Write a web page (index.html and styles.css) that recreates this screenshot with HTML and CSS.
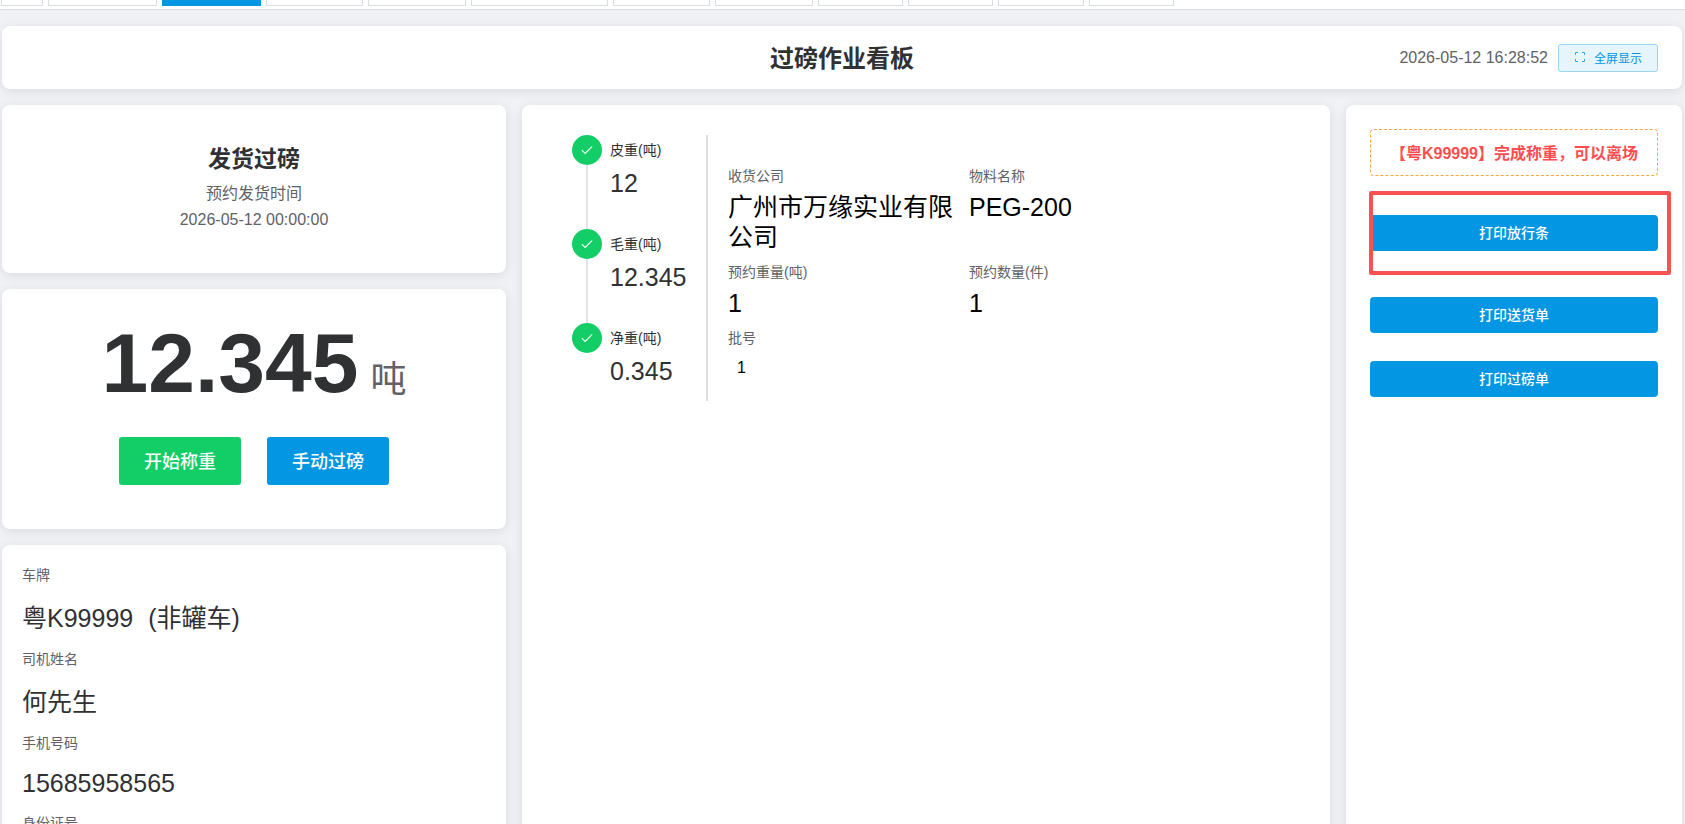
FILE: index.html
```html
<!DOCTYPE html>
<html lang="zh-CN">
<head>
    <meta charset="UTF-8">
    <meta name="viewport" content="width=device-width, initial-scale=1.0">
    <title>过磅作业看板</title>
    <link rel="stylesheet" href="styles.css">
</head>
<body>
    <div class="tags-bar">
        <span class="tag" style="width: 42px"></span>
        <span class="tag" style="width: 109px"></span>
        <span class="tag active" style="width: 99px"></span>
        <span class="tag" style="width: 97px"></span>
        <span class="tag" style="width: 98px"></span>
        <span class="tag" style="width: 137px"></span>
        <span class="tag" style="width: 97px"></span>
        <span class="tag" style="width: 98px"></span>
        <span class="tag" style="width: 85px"></span>
        <span class="tag" style="width: 85px"></span>
        <span class="tag" style="width: 86px"></span>
        <span class="tag" style="width: 85px"></span>
    </div>

    <div class="board">
        <header class="card header">
            <h1>过磅作业看板</h1>
            <div class="header-right">
                <span class="clock">2026-05-12 16:28:52</span>
                <button class="btn-full">
                    <svg width="12" height="12" viewBox="0 0 12 12" fill="none" stroke="currentColor">
                        <path d="M1.5 4V1.5H4M8 1.5H10.5V4M10.5 8V10.5H8M4 10.5H1.5V8"/>
                    </svg>
                    <span>全屏显示</span>
                </button>
            </div>
        </header>

        <main class="content">
            <div class="left">
                <section class="card plan">
                    <h2>发货过磅</h2>
                    <p class="plan-label">预约发货时间</p>
                    <p class="plan-time">2026-05-12 00:00:00</p>
                </section>

                <section class="card scale">
                    <div class="weight">
                        <span class="weight-num">12.345</span>
                        <span class="weight-unit">吨</span>
                    </div>
                    <div class="scale-btns">
                        <button class="btn btn-big btn-green">开始称重</button>
                        <button class="btn btn-big">手动过磅</button>
                    </div>
                </section>

                <section class="card driver">
                    <div class="label">车牌</div>
                    <div class="value">粤K99999<span class="car-type">(非罐车)</span></div>
                    <div class="label">司机姓名</div>
                    <div class="value">何先生</div>
                    <div class="label">手机号码</div>
                    <div class="value value-num">15685958565</div>
                    <div class="label">身份证号</div>
                </section>
            </div>

            <section class="card middle">
                <div class="steps">
                    <div class="step">
                        <div class="step-icon">
                            <svg width="14" height="14" viewBox="0 0 14 14"><path d="M1.8 7.2L5.2 10.4L12.2 3.4"/></svg>
                        </div>
                        <div class="step-main">
                            <div class="step-title">皮重(吨)</div>
                            <div class="step-value">12</div>
                        </div>
                    </div>
                    <div class="step">
                        <div class="step-icon">
                            <svg width="14" height="14" viewBox="0 0 14 14"><path d="M1.8 7.2L5.2 10.4L12.2 3.4"/></svg>
                        </div>
                        <div class="step-main">
                            <div class="step-title">毛重(吨)</div>
                            <div class="step-value">12.345</div>
                        </div>
                    </div>
                    <div class="step">
                        <div class="step-icon">
                            <svg width="14" height="14" viewBox="0 0 14 14"><path d="M1.8 7.2L5.2 10.4L12.2 3.4"/></svg>
                        </div>
                        <div class="step-main">
                            <div class="step-title">净重(吨)</div>
                            <div class="step-value">0.345</div>
                        </div>
                    </div>
                </div>

                <div class="detail">
                    <div class="field">
                        <div class="field-label">收货公司</div>
                        <div class="field-value">广州市万缘实业有限公司</div>
                    </div>
                    <div class="field">
                        <div class="field-label">物料名称</div>
                        <div class="field-value">PEG-200</div>
                    </div>
                    <div class="field">
                        <div class="field-label">预约重量(吨)</div>
                        <div class="field-value">1</div>
                    </div>
                    <div class="field">
                        <div class="field-label">预约数量(件)</div>
                        <div class="field-value">1</div>
                    </div>
                    <div class="field">
                        <div class="field-label">批号</div>
                        <div class="field-batch">1</div>
                    </div>
                </div>
            </section>

            <aside class="card right">
                <div class="notice">【粤K99999】完成称重，可以离场</div>
                <div class="print-item marked">
                    <button class="btn btn-print">打印放行条</button>
                </div>
                <div class="print-item">
                    <button class="btn btn-print">打印送货单</button>
                </div>
                <div class="print-item">
                    <button class="btn btn-print">打印过磅单</button>
                </div>
            </aside>
        </main>
    </div>
</body>
</html>
```

FILE: styles.css
```css
*, *::before, *::after {
    box-sizing: border-box;
}
body {
    margin: 0;
    height: 824px;
    overflow: hidden;
    background-color: #f0f2f5;
    font-family: "Liberation Sans", "Noto Sans CJK SC", sans-serif;
    color: #303133;
}
h1, h2, p {
    margin: 0;
}
button {
    font-family: inherit;
    cursor: pointer;
}

/* tags */
.tags-bar {
    display: flex;
    gap: 5px;
    height: 10px;
    padding-left: 1px;
    background-color: #fff;
    border-bottom: 1px solid #d8dce5;
}
.tag {
    height: 6px;
    border: 1px solid #d8dce5;
    border-top: none;
    background-color: #fff;
}
.tag.active {
    background-color: #0396e2;
    border-color: #0396e2;
}

.board {
    padding: 16px 3px 0 2px;
}
.card {
    background-color: #fff;
    border-radius: 8px;
    box-shadow: 0 2px 12px rgba(0, 0, 0, 0.1);
}

/* header */
.header {
    display: grid;
    grid-template-columns: 1fr auto 1fr;
    align-items: center;
    height: 63px;
    padding: 0 24px;
}
.header h1 {
    grid-column: 2;
    font-size: 24px;
    line-height: 36px;
    padding-top: 3px;
}
.header-right {
    display: flex;
    justify-content: flex-end;
    align-items: center;
    gap: 10px;
}
.clock {
    font-size: 16px;
    color: #606266;
}
.btn-full {
    display: flex;
    align-items: center;
    justify-content: center;
    gap: 8px;
    width: 100px;
    height: 28px;
    padding: 0 0 1px;
    font-size: 12px;
    color: #0396e2;
    background-color: #e6f5fc;
    border: 1px solid #9ad5f3;
    border-radius: 3px;
}
.btn-full svg {
    opacity: 0.8;
}

/* layout */
.content {
    display: grid;
    grid-template-columns: 504px 808px 336px;
    gap: 16px;
    height: 760px;
    margin-top: 16px;
}
.left {
    display: flex;
    flex-direction: column;
    gap: 16px;
}

.plan {
    height: 168px;
    padding-top: 36px;
    text-align: center;
}
.plan h2 {
    font-size: 23px;
    line-height: 36px;
}
.plan p {
    font-size: 16px;
    line-height: 26px;
    color: #606266;
}
.plan .plan-label {
    padding-top: 4px;
}

.scale {
    height: 240px;
    padding-top: 26px;
}
.weight {
    display: flex;
    justify-content: center;
    align-items: baseline;
    gap: 12px;
    height: 122px;
    line-height: 96px;
}
.weight-num {
    font-size: 84px;
    font-weight: bold;
}
.weight-unit {
    font-size: 36px;
    color: #606266;
}
.scale-btns {
    display: flex;
    justify-content: center;
    gap: 26px;
}
.btn {
    padding: 0 0 2px;
    border: none;
    color: #fff;
    background-color: #0396e2;
    font-weight: 500;
}
.btn-big {
    width: 122px;
    height: 48px;
    font-size: 18px;
    border-radius: 3px;
}
.btn-green {
    background-color: #13ce66;
}

.driver {
    flex: 1;
    padding: 20px;
}
.label {
    height: 20px;
    font-size: 14px;
    line-height: 21px;
    color: #606266;
}
.value {
    height: 64px;
    font-size: 25px;
    line-height: 66px;
}
.value-num {
    height: 60px;
    line-height: 60px;
}
.car-type {
    margin-left: 15px;
}

/* weighing steps and order detail */
.middle {
    display: flex;
    align-items: flex-start;
    padding: 30px 50px;
}
.steps {
    width: 136px;
    height: 266px;
    border-right: 2px solid #ddd;
}
.step {
    position: relative;
    display: flex;
    gap: 8px;
    height: 94px;
}
.step:last-child {
    height: 78px;
}
.step::before {
    content: "";
    position: absolute;
    left: 14px;
    top: 30px;
    bottom: 0;
    width: 2px;
    background-color: #dfe4ed;
}
.step:last-child::before {
    display: none;
}
.step-icon {
    display: flex;
    align-items: center;
    justify-content: center;
    width: 30px;
    height: 30px;
    border-radius: 50%;
    background-color: #13ce66;
}
.step-icon svg {
    fill: none;
    stroke: #fff;
    stroke-width: 1.1;
}
.step-title {
    font-size: 14px;
    line-height: 30px;
}
.step-value {
    font-size: 25px;
    line-height: 36px;
}
.detail {
    display: grid;
    grid-template-columns: 226px 226px;
    column-gap: 15px;
    margin-left: 20px;
    padding-top: 30px;
}
.field-label {
    font-size: 14px;
    line-height: 22px;
    color: #606266;
}
.field-value {
    padding: 5px 0 9px;
    font-size: 25px;
    line-height: 30px;
    color: #000;
}
.field-batch {
    padding: 9px;
    font-size: 16px;
    line-height: 20px;
    color: #000;
}

/* print */
.right {
    padding: 24px;
}
.notice {
    height: 47px;
    border: 1px dashed #f9a63f;
    border-radius: 4px;
    font-size: 16px;
    font-weight: bold;
    line-height: 47px;
    text-align: center;
    white-space: nowrap;
    color: #ff4d4f;
}
.print-item {
    margin-top: 28px;
}
.marked {
    position: relative;
    margin-top: 39px;
    margin-bottom: 46px;
}
.marked::after {
    content: "";
    position: absolute;
    left: -1px;
    top: -24px;
    width: 302px;
    height: 84px;
    border: 4px solid #fa5151;
    border-radius: 2px;
}
.marked + .print-item {
    margin-top: 0;
}
.btn-print {
    display: block;
    width: 100%;
    height: 36px;
    font-size: 14px;
    border-radius: 4px;
}
```
